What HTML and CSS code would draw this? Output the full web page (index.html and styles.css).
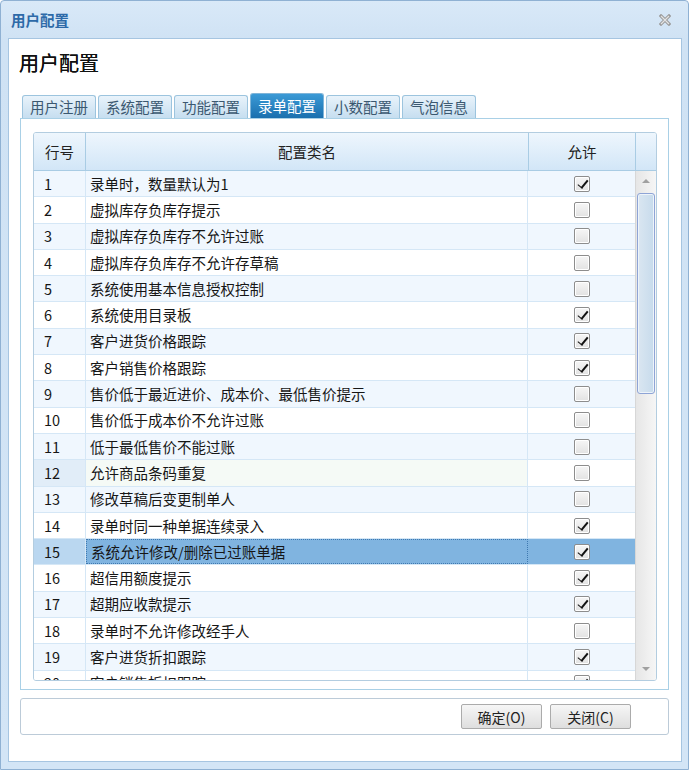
FILE: index.html
```html
<!DOCTYPE html>
<html>
<head>
    <meta charset="UTF-8">
    <title>用户配置</title>
    <link rel="stylesheet" href="styles.css">
</head>
<body>
    <div class="window">
        <div class="titlebar">
            <span class="title">用户配置</span>
            <svg class="close" width="12" height="12" viewBox="0 0 12 12">
                <path d="M2 2 L10 10 M10 2 L2 10" stroke="#9a9a9a" stroke-width="3.2" stroke-linecap="square"/>
                <path d="M2 2 L10 10 M10 2 L2 10" stroke="#e4e4e4" stroke-width="1.2"/>
            </svg>
        </div>

        <div class="client">
            <h1>用户配置</h1>

            <div class="tabs">
                <div class="tab">用户注册</div>
                <div class="tab">系统配置</div>
                <div class="tab">功能配置</div>
                <div class="tab active">录单配置</div>
                <div class="tab">小数配置</div>
                <div class="tab">气泡信息</div>
            </div>

            <div class="tab-panel">
                <div class="grid">
                    <div class="grid-head">
                        <div class="col-no">行号</div>
                        <div class="col-name">配置类名</div>
                        <div class="col-allow">允许</div>
                        <div class="col-pad"></div>
                    </div>
                    <div class="grid-body">
                        <div class="rows">
                            <div class="row"><div class="col-no">1</div><div class="col-name">录单时，数量默认为1</div><div class="col-allow"><span class="check on"></span></div></div>
                            <div class="row"><div class="col-no">2</div><div class="col-name">虚拟库存负库存提示</div><div class="col-allow"><span class="check"></span></div></div>
                            <div class="row"><div class="col-no">3</div><div class="col-name">虚拟库存负库存不允许过账</div><div class="col-allow"><span class="check"></span></div></div>
                            <div class="row"><div class="col-no">4</div><div class="col-name">虚拟库存负库存不允许存草稿</div><div class="col-allow"><span class="check"></span></div></div>
                            <div class="row"><div class="col-no">5</div><div class="col-name">系统使用基本信息授权控制</div><div class="col-allow"><span class="check"></span></div></div>
                            <div class="row"><div class="col-no">6</div><div class="col-name">系统使用目录板</div><div class="col-allow"><span class="check on"></span></div></div>
                            <div class="row"><div class="col-no">7</div><div class="col-name">客户进货价格跟踪</div><div class="col-allow"><span class="check on"></span></div></div>
                            <div class="row"><div class="col-no">8</div><div class="col-name">客户销售价格跟踪</div><div class="col-allow"><span class="check on"></span></div></div>
                            <div class="row"><div class="col-no">9</div><div class="col-name">售价低于最近进价、成本价、最低售价提示</div><div class="col-allow"><span class="check"></span></div></div>
                            <div class="row"><div class="col-no">10</div><div class="col-name">售价低于成本价不允许过账</div><div class="col-allow"><span class="check"></span></div></div>
                            <div class="row"><div class="col-no">11</div><div class="col-name">低于最低售价不能过账</div><div class="col-allow"><span class="check"></span></div></div>
                            <div class="row hover"><div class="col-no">12</div><div class="col-name">允许商品条码重复</div><div class="col-allow"><span class="check"></span></div></div>
                            <div class="row"><div class="col-no">13</div><div class="col-name">修改草稿后变更制单人</div><div class="col-allow"><span class="check"></span></div></div>
                            <div class="row"><div class="col-no">14</div><div class="col-name">录单时同一种单据连续录入</div><div class="col-allow"><span class="check on"></span></div></div>
                            <div class="row selected"><div class="col-no">15</div><div class="col-name">系统允许修改/删除已过账单据</div><div class="col-allow"><span class="check on"></span></div></div>
                            <div class="row"><div class="col-no">16</div><div class="col-name">超信用额度提示</div><div class="col-allow"><span class="check on"></span></div></div>
                            <div class="row"><div class="col-no">17</div><div class="col-name">超期应收款提示</div><div class="col-allow"><span class="check on"></span></div></div>
                            <div class="row"><div class="col-no">18</div><div class="col-name">录单时不允许修改经手人</div><div class="col-allow"><span class="check"></span></div></div>
                            <div class="row"><div class="col-no">19</div><div class="col-name">客户进货折扣跟踪</div><div class="col-allow"><span class="check on"></span></div></div>
                            <div class="row"><div class="col-no">20</div><div class="col-name">客户销售折扣跟踪</div><div class="col-allow"><span class="check on"></span></div></div>
                        </div>
                        <div class="scrollbar">
                            <div class="arrow up"></div>
                            <div class="thumb"></div>
                            <div class="track"></div>
                            <div class="arrow down"></div>
                        </div>
                    </div>
                </div>
            </div>

            <div class="button-bar">
                <button>确定(O)</button>
                <button>关闭(C)</button>
            </div>
        </div>
    </div>
</body>
</html>
```

FILE: styles.css
```css
* {
    margin: 0;
    padding: 0;
    box-sizing: border-box;
}

body {
    font-family: "Noto Sans CJK SC", "Liberation Sans", sans-serif;
    background: #fff;
    color: #1a1a1a;
}

.window {
    width: 689px;
    height: 770px;
    background: linear-gradient(180deg, #d9e9f8 0, #cfe2f4 40px, #d3e5f6 100%);
    border: 1px solid #8fb1d3;
    border-radius: 4px 4px 0 0;
    display: flex;
    flex-direction: column;
}

.titlebar {
    height: 37px;
    display: flex;
    align-items: center;
    justify-content: space-between;
    padding: 0 17px 0 10px;
}

.title {
    font-size: 14.5px;
    font-weight: bold;
    color: #2d6aa8;
    line-height: 20px;
}

.close {
    display: block;
}

.client {
    flex: 1;
    margin: 0 6px 7px 7px;
    background: #fff;
    border: 1px solid #a6c5e1;
    padding: 0 12px 0 11px;
    display: flex;
    flex-direction: column;
}

h1 {
    font-size: 20px;
    font-weight: normal;
    line-height: 26px;
    margin-top: 11px;
    margin-left: -1px;
    color: #111;
    text-shadow: 0 0 0.4px #111;
}

.tabs {
    display: flex;
    align-items: flex-end;
    gap: 2px;
    height: 25px;
    margin-top: 17px;
    padding-left: 2px;
}

.tab {
    height: 23px;
    padding: 0 7px;
    font-size: 14.5px;
    line-height: 22px;
    color: #3b5870;
    background: linear-gradient(180deg, #e9f3fb, #c6def0);
    border: 1px solid #9cc4de;
    border-bottom: none;
    border-radius: 3px 3px 0 0;
}

.tab.active {
    height: 25px;
    line-height: 24px;
    color: #fff;
    background: linear-gradient(180deg, #3b9ad6, #1a6fae);
    border-color: #7fb4d8;
}

.tab-panel {
    height: 572px;
    border: 1px solid #a9d0e6;
    padding: 13px 11px 8px 12px;
}

.grid {
    height: 100%;
    border: 1px solid #b3cde0;
    border-radius: 3px;
    overflow: hidden;
    display: flex;
    flex-direction: column;
    font-size: 14.5px;
}

.grid-head {
    height: 38px;
    display: flex;
    background: linear-gradient(180deg, #eef6fd, #d2e6f7);
    border-bottom: 1px solid #a9cce4;
    color: #222;
}

.grid-head > div {
    display: flex;
    align-items: center;
    justify-content: center;
    border-right: 1px solid #a9cce4;
}

.grid-head .col-pad {
    border-right: none;
}

.col-no {
    width: 52px;
    flex-shrink: 0;
}

.col-name {
    flex: 1;
}

.col-allow {
    width: 107px;
    flex-shrink: 0;
}

.col-pad {
    width: 20px;
}

.grid-body {
    flex: 1;
    display: flex;
    overflow: hidden;
}

.rows {
    flex: 1;
    overflow: hidden;
}

.row {
    height: 26.3px;
    display: flex;
    border-bottom: 1px solid #d5e7f6;
    background: #fff;
    color: #161616;
}

.row:nth-child(odd) {
    background: #f0f7fe;
}

.row > div {
    display: flex;
    align-items: center;
    border-right: 1px solid #d5e7f6;
    line-height: 20px;
}

.row .col-no {
    padding-left: 10px;
}

.row .col-name {
    padding-left: 4px;
}

.row .col-allow {
    justify-content: center;
    border-right: none;
    width: 107px;
}

.row.hover .col-no {
    background: #e1edf8;
}

.row.hover .col-name {
    background: #f5faf6;
}

.row.selected {
    background: #80b4e0;
}

.row.selected .col-no {
    background: #bad7f0;
}

.row.selected .col-name {
    border: 1px dotted #3f79b0;
}

.check {
    width: 16px;
    height: 16px;
    border: 1px solid #8d8d8d;
    border-radius: 2px;
    background: linear-gradient(180deg, #f6f6f6, #e2e2e2);
    box-shadow: inset 0 0 0 1px #fff;
    position: relative;
}

.check.on::after {
    content: "";
    position: absolute;
    left: 5px;
    top: 1px;
    width: 4px;
    height: 9px;
    border-right: 2.5px solid #111;
    border-bottom: 1.5px solid #111;
    transform: rotate(40deg);
}

.scrollbar {
    width: 21px;
    display: flex;
    flex-direction: column;
    background: linear-gradient(90deg, #e6e6e6, #f6f6f6);
    border-left: 1px solid #d7d7d7;
    padding: 0 1px;
}

.arrow {
    height: 21px;
    position: relative;
}

.arrow::after {
    content: "";
    position: absolute;
    left: 5px;
    border-left: 4px solid transparent;
    border-right: 4px solid transparent;
}

.arrow.up::after {
    top: 8px;
    border-bottom: 4px solid #a0a0a0;
}

.arrow.down::after {
    top: 8px;
    border-top: 4px solid #a0a0a0;
}

.thumb {
    height: 201px;
    margin-top: 1px;
    border: 1px solid #8ea4d6;
    border-radius: 3px;
    background: linear-gradient(90deg, #dae6f1, #c7dbec);
    box-shadow: inset 0 0 0 1px #eef4fa;
}

.track {
    flex: 1;
}

.button-bar {
    height: 37px;
    margin-top: 8px;
    border: 1px solid #bccbd8;
    border-radius: 3px;
    display: flex;
    justify-content: flex-end;
    align-items: center;
    gap: 8px;
    padding-right: 37px;
}

button {
    width: 81px;
    height: 25px;
    font-family: "Noto Sans CJK SC", "Liberation Sans", sans-serif;
    font-size: 14px;
    color: #222;
    background: linear-gradient(180deg, #f6f6f6, #dedede);
    border: 1px solid #ababab;
    border-radius: 2px;
}
```
